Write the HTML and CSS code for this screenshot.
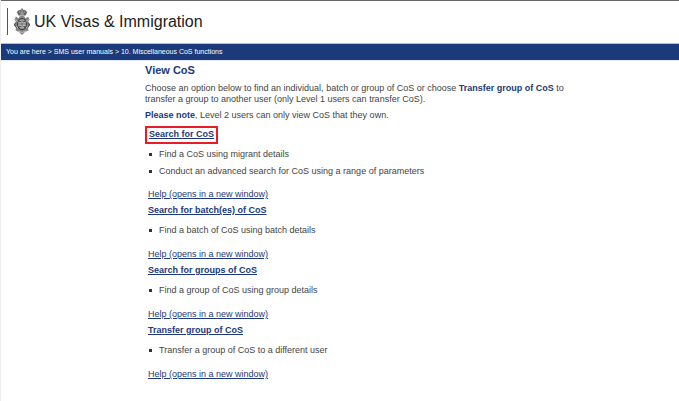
FILE: index.html
```
<!DOCTYPE html>
<html lang="en">
	<head>
		<meta charset="utf-8">
		<title>View CoS</title>
		<link rel="stylesheet" href="styles.css">
	</head>
	<body>
		<header class="header">
			<div class="logo">
				<svg class="crest" viewBox="0 0 32 54" aria-hidden="true">
					<path d="M6 9 Q7 3 13 4 L16 0 L19 4 Q25 3 26 9 L23 15 H9 Z" fill="#666"/>
					<path d="M10 8h3M19 8h3M12 12h8M16 3v9" stroke="#ccc" stroke-width="1.5"/>
					<path d="M11 17 Q16 14 21 17 L23 21 L28 17 L31 23 L28 28 L32 34 L28 40 L29 45 L22 48 L16 54 L10 48 L3 45 L4 40 L0 34 L4 28 L1 23 L4 17 L9 21 Z" fill="#858585"/>
					<ellipse cx="16" cy="32" rx="9" ry="11" fill="#ccc" stroke="#444" stroke-width="2.5"/>
					<path d="M16 22v20M8 32h16" stroke="#666" stroke-width="2"/>
					<path d="M10 27h4M18 27h4M10 37h4M19 36l3 3" stroke="#555" stroke-width="3"/>
					<path d="M3 23l5 4M29 23l-5 4M4 36l4 4M28 36l-4 4M8 46l8 3 8-3" fill="none" stroke="#ccc" stroke-width="1.5"/>
					<path d="M3 29l-2 5 4 5M29 29l2 5-4 5" fill="none" stroke="#444" stroke-width="2"/>
				</svg>
				<span>UK Visas &amp; Immigration</span>
			</div>
		</header>
		<nav class="breadcrumb">You are here &gt; SMS user manuals &gt; 10. Miscellaneous CoS functions</nav>
		<main class="content">
			<h1>View CoS</h1>
			<p>Choose an option below to find an individual, batch or group of CoS or choose <strong>Transfer group of CoS</strong> to transfer a group to another user (only Level 1 users can transfer CoS).</p>
			<p><strong>Please note</strong>, Level 2 users can only view CoS that they own.</p>
			<section>
				<h2 class="highlight"><a href="#">Search for CoS</a></h2>
				<ul>
					<li>Find a CoS using migrant details</li>
					<li>Conduct an advanced search for CoS using a range of parameters</li>
				</ul>
				<a class="help" href="#">Help (opens in a new window)</a>
			</section>
			<section>
				<h2><a href="#">Search for batch(es) of CoS</a></h2>
				<ul>
					<li>Find a batch of CoS using batch details</li>
				</ul>
				<a class="help" href="#">Help (opens in a new window)</a>
			</section>
			<section>
				<h2><a href="#">Search for groups of CoS</a></h2>
				<ul>
					<li>Find a group of CoS using group details</li>
				</ul>
				<a class="help" href="#">Help (opens in a new window)</a>
			</section>
			<section>
				<h2><a href="#">Transfer group of CoS</a></h2>
				<ul>
					<li>Transfer a group of CoS to a different user</li>
				</ul>
				<a class="help" href="#">Help (opens in a new window)</a>
			</section>
		</main>
	</body>
</html>
```
FILE: styles.css
```
* { box-sizing: border-box; }

body { border-left: 1px solid #eee; color: #444; font: 9px/11px "Liberation Sans", Arial, sans-serif; margin: 0; min-height: 100vh; }

h1, h2, p, ul { margin: 0; padding: 0; }

a { color: #1b3a77; }

strong { color: #1b3a77; }

.header { border-bottom: 1px solid #b8c0d0; border-top: 1px solid #666; padding: 7px 6px 8px; }

.logo { align-items: center; border-left: 1px solid #9325b2; color: #222; display: flex; font-size: 16px; gap: 4px; height: 27px; line-height: 20px; padding-left: 6px; }

.crest { height: 27px; width: 16px; }

.breadcrumb { background-color: #1b3a79; border-bottom: 1px solid #e8ebf3; color: #fff; font-size: 7px; line-height: 16px; padding: 0 5px; }

.content { margin-left: 144px; max-width: 420px; padding-top: 3px; }

h1 { color: #1b3a77; font-size: 11px; line-height: 12px; margin-bottom: 7px; }

p { margin-bottom: 5px; }

h2 { font-size: 9px; line-height: 11px; padding-left: 3px; }

.highlight { border: 2px solid #e81c2a; line-height: 13px; padding: 0 2px 1px; width: fit-content; }

ul { list-style: none; padding: 6px 0 10px 4px; }

.highlight + ul { padding: 2px 0 9px 4px; }

li { align-items: center; display: flex; gap: 7px; line-height: 17px; }

li::before { background-color: #333; content: ""; height: 3px; width: 3px; }

.help { display: block; margin: 0 0 5px 3px; width: fit-content; }
```
